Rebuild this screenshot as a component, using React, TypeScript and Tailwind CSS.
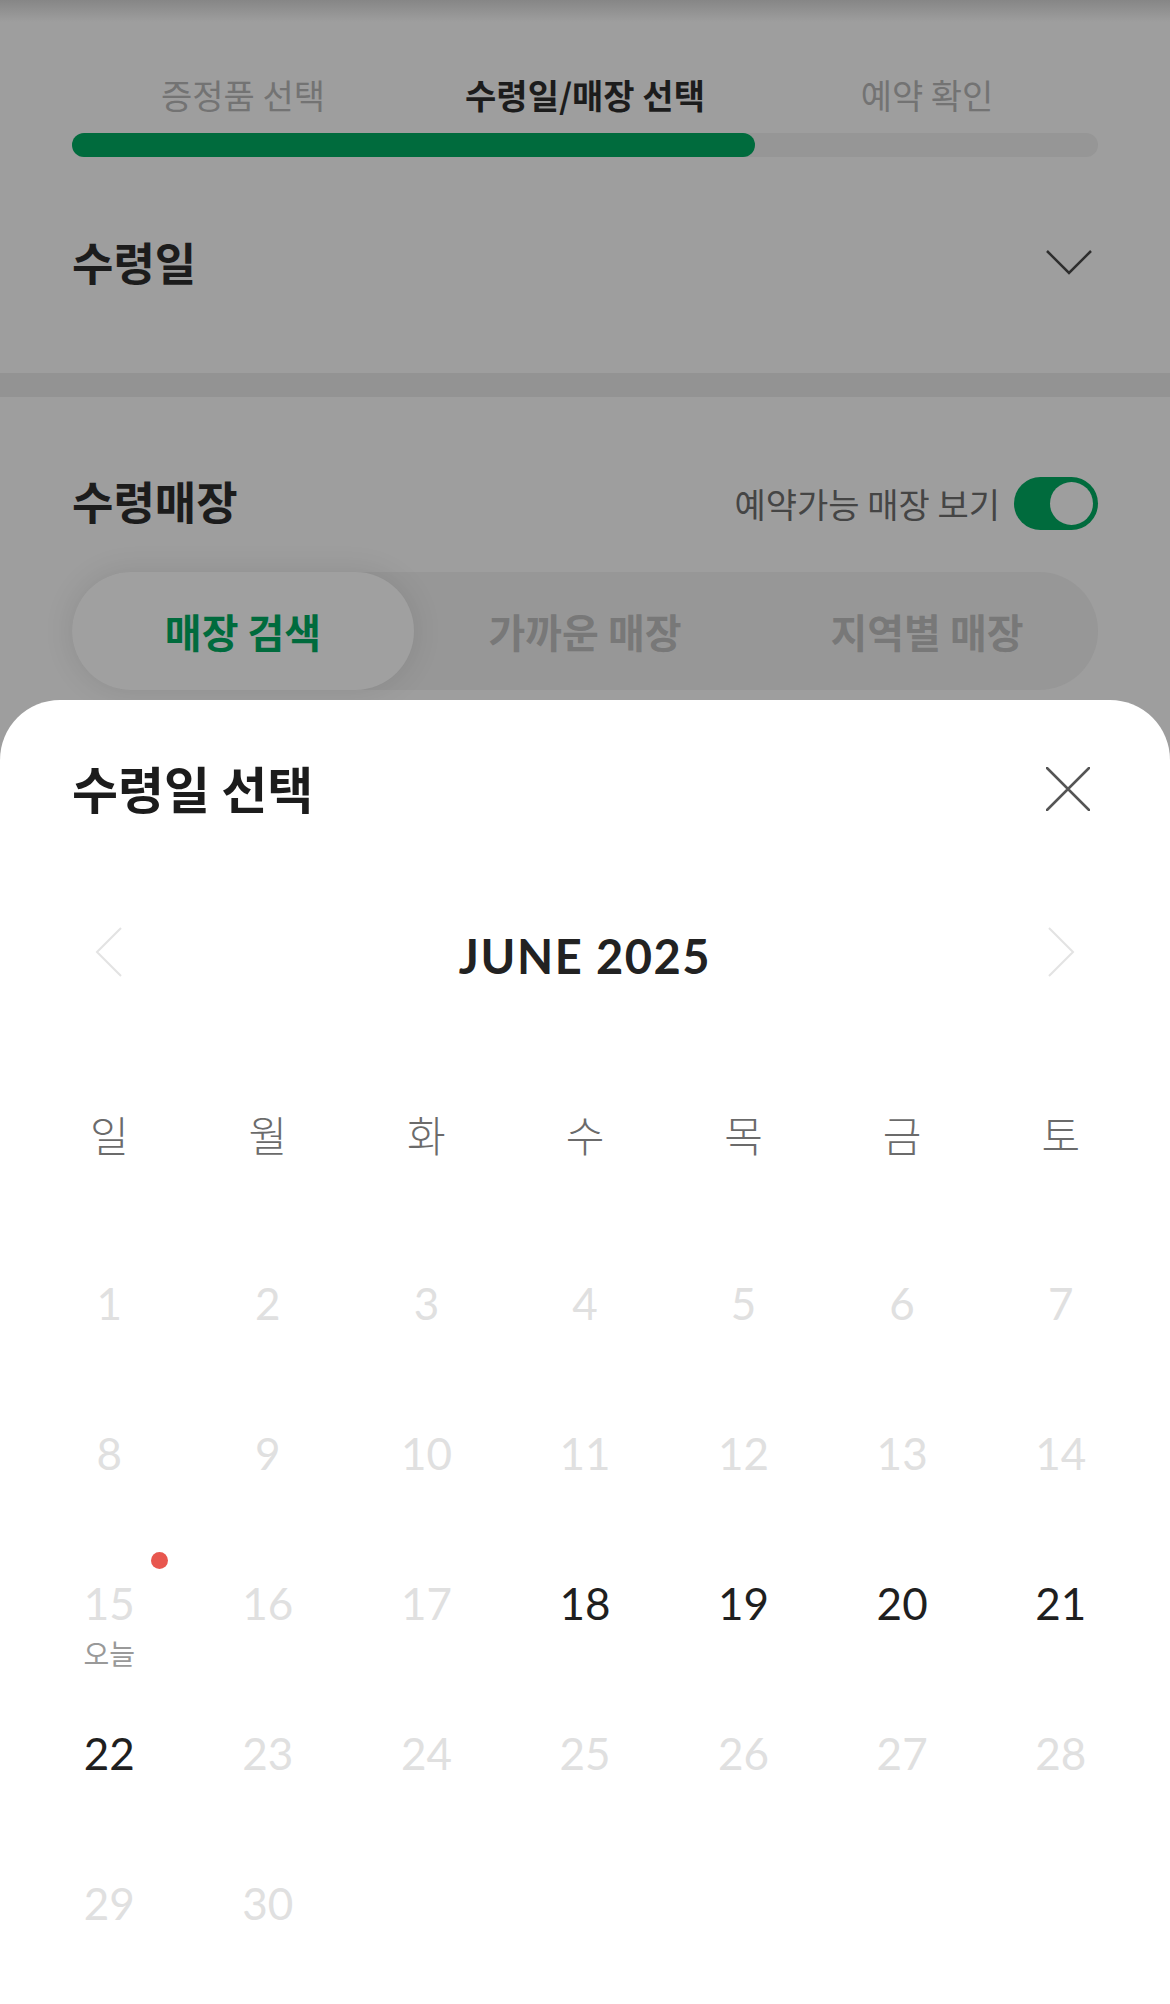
import React from 'react';

const KR = { fontFamily: '"Noto Sans CJK KR", "Noto Sans", sans-serif' };

const steps = [
  { label: '증정품 선택', active: false },
  { label: '수령일/매장 선택', active: true },
  { label: '예약 확인', active: false },
];

const weekdays = ['일', '월', '화', '수', '목', '금', '토'];

// June 2025: 18~22 can be picked, 15 is today
const enabled = [18, 19, 20, 21, 22];
const days = Array.from({ length: 30 }, (_, i) => i + 1);

const App = () => {
  return (
    <div
      className="relative w-[1170px] h-[2004px] overflow-hidden bg-[#9e9e9e]"
      style={KR}
    >
      <div className="absolute top-0 left-0 right-0 h-[22px] bg-gradient-to-b from-[#868686] to-transparent" />

      {/* steps */}
      <div className="px-[72px] pt-[73px]">
        <div className="grid grid-cols-3">
          {steps.map((s) => (
            <div
              key={s.label}
              className={`text-center text-[34px] leading-[44px] ${
                s.active ? 'font-bold text-[#1c1c1c]' : 'text-[#737373]'
              }`}
            >
              {s.label}
            </div>
          ))}
        </div>
        <div className="mt-[16px] h-[24px] rounded-full bg-[#969696]">
          <div className="h-full w-[683px] rounded-full bg-[#006b3d]" />
        </div>
      </div>

      {/* 수령일 */}
      <div className="flex h-[216px] items-center justify-between pb-[6px] pl-[72px] pr-[78px]">
        <span className="text-[45px] font-bold text-[#1c1c1c]">수령일</span>
        <svg width="46" height="26" viewBox="0 0 46 26" fill="none">
          <path d="M1 2 L23 24 L45 2" stroke="#2e2e2e" strokeWidth="2.5" />
        </svg>
      </div>

      <div className="h-[24px] bg-[#939393]" />

      {/* 수령매장 */}
      <div className="px-[72px] pt-[79px]">
        <div className="flex h-[54px] items-center justify-between">
          <span className="text-[45px] font-bold text-[#1c1c1c] -mt-[4px]">수령매장</span>
          <div className="flex items-center gap-[14px]">
            <span className="text-[34px] text-[#454545]">예약가능 매장 보기</span>
            <div className="flex h-[53px] w-[84px] items-center justify-end rounded-full bg-[#006b3d] pr-[5px]">
              <div className="h-[43px] w-[43px] rounded-full bg-[#9e9e9e]" />
            </div>
          </div>
        </div>

        <div className="mt-[42px] grid h-[118px] grid-cols-3 rounded-full bg-[#979797]">
          <div className="flex items-center justify-center rounded-full bg-[#a0a0a0] shadow-[0_0_30px_rgba(0,0,0,0.1)] text-[40px] font-bold text-[#006b3d]">
            매장 검색
          </div>
          <div className="flex items-center justify-center text-[40px] font-bold text-[#787878]">
            가까운 매장
          </div>
          <div className="flex items-center justify-center text-[40px] font-bold text-[#787878]">
            지역별 매장
          </div>
        </div>
      </div>

      {/* bottom sheet */}
      <div className="absolute left-0 right-0 top-[700px] bottom-0 rounded-t-[60px] bg-white">
        <div className="mt-[59px] flex h-[60px] items-center justify-between pl-[72px] pr-[80px]">
          <span className="text-[50px] font-bold text-[#1c1c1c] -mt-[4px]">수령일 선택</span>
          <svg width="44" height="44" viewBox="0 0 44 44" fill="none">
            <path d="M1 1 L43 43 M43 1 L1 43" stroke="#555" strokeWidth="2.5" strokeLinecap="round" />
          </svg>
        </div>

        <div className="mt-[103px] flex h-[60px] items-center justify-between px-[95px]">
          <svg width="27" height="50" viewBox="0 0 27 50" fill="none">
            <path d="M26 1 L2 25 L26 49" stroke="#e3e3e3" strokeWidth="2" />
          </svg>
          <span
            className="mt-[8px] text-[47px] font-bold tracking-[1.5px] text-[#222]"
            style={{ fontFamily: 'Lato, "Liberation Sans", sans-serif' }}
          >
            JUNE 2025
          </span>
          <svg width="27" height="50" viewBox="0 0 27 50" fill="none">
            <path d="M1 1 L25 25 L1 49" stroke="#e3e3e3" strokeWidth="2" />
          </svg>
        </div>

        <div className="mt-[120px] grid h-[60px] grid-cols-7 px-[30px]">
          {weekdays.map((w) => (
            <div key={w} className="flex items-center justify-center text-[42px] font-light text-[#6b6b6b]">
              {w}
            </div>
          ))}
        </div>

        <div
          className="mt-[66px] grid grid-cols-7 px-[30px]"
          style={{ fontFamily: 'Lato, "Liberation Sans", sans-serif' }}
        >
          {days.map((d) => (
            <div key={d} className="relative flex h-[150px] items-center justify-center">
              <span className={`text-[44px] ${enabled.includes(d) ? 'text-[#1f1f1f]' : 'text-[#e0e0e0]'}`}>
                {d}
              </span>
              {d === 15 && (
                <>
                  <span className="absolute left-[121px] top-[24px] h-[17px] w-[17px] rounded-full bg-[#e8574f]" />
                  <span
                    className="absolute left-0 right-0 top-[108px] text-center text-[28px] leading-[34px] text-[#999]"
                    style={KR}
                  >
                    오늘
                  </span>
                </>
              )}
            </div>
          ))}
        </div>
      </div>
    </div>
  );
};

export default App;
